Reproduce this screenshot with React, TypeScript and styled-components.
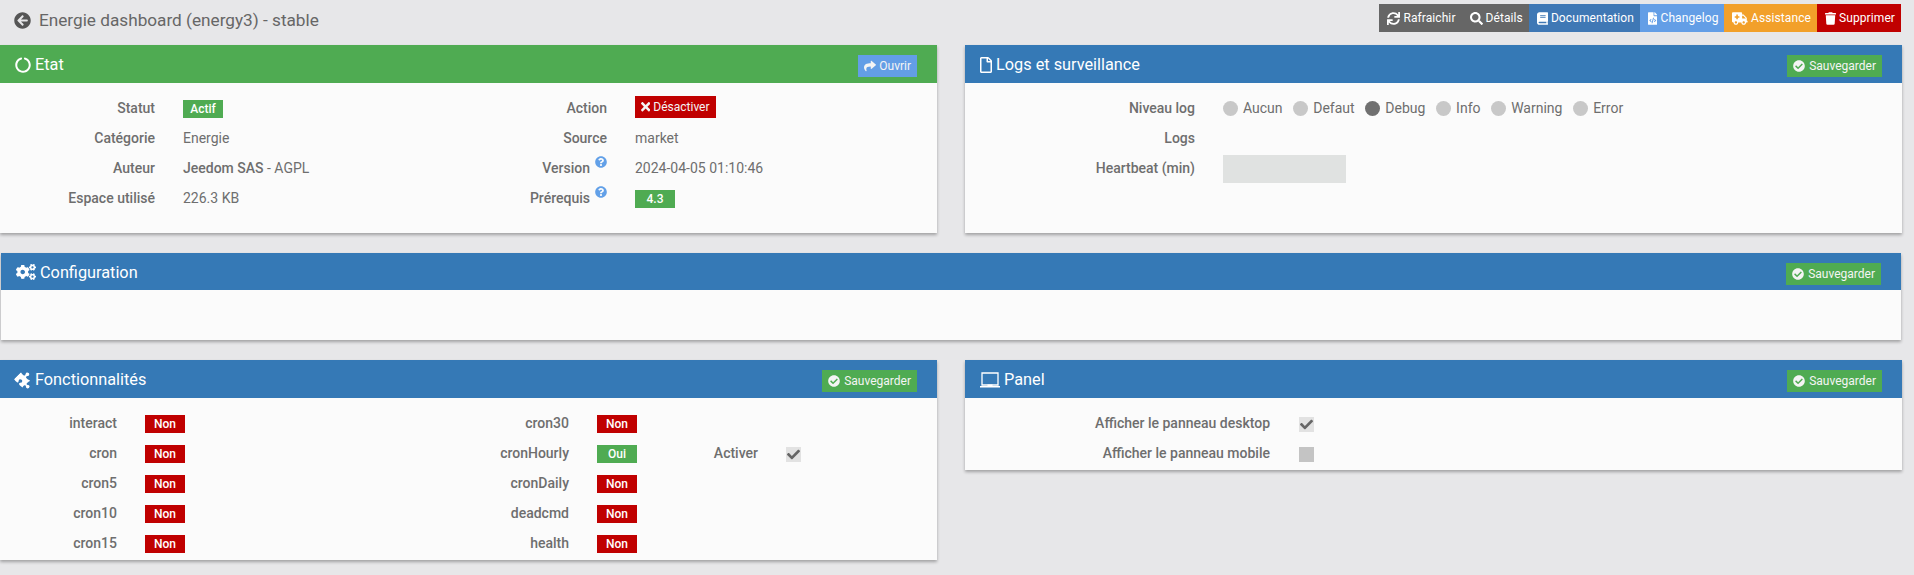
import { Fragment } from "react";
import styled, { createGlobalStyle } from "styled-components";
import {
  FaAmbulance,
  FaArrowCircleLeft,
  FaBook,
  FaCheck,
  FaCheckCircle,
  FaCircleNotch,
  FaCogs,
  FaFileCode,
  FaPuzzlePiece,
  FaQuestionCircle,
  FaRegFile,
  FaSearch,
  FaShare,
  FaSync,
  FaTimes,
  FaTrash,
} from "react-icons/fa";

const GREEN = "#4fab52";
const BLUE = "#3579b6";
const RED = "#c00000";

const GlobalStyle = createGlobalStyle`
  html, body {
    margin: 0;
    background: #e7e7e9;
    overflow: hidden;
  }
  body {
    font-family: Roboto, "Liberation Sans", sans-serif;
    font-size: 14px;
    color: #6e6e6e;
  }
`;

const Page = styled.div`
  width: 1902px;
  min-height: 575px;
`;

const TopBar = styled.div`
  height: 45px;
  display: flex;
  justify-content: space-between;
  align-items: flex-start;
`;

const PageTitle = styled.h1`
  margin: 0;
  height: 40px;
  padding-left: 14px;
  display: flex;
  align-items: center;
  gap: 8px;
  font-size: 17.2px;
  font-weight: 400;
  color: #666;
  svg {
    font-size: 17px;
    color: #555;
  }
`;

const ActionBar = styled.div`
  display: flex;
  margin: 4px 1px 0 0;
`;

const ActionButton = styled.button<{ $bg: string }>`
  height: 28px;
  padding: 0 6px 0 8px;
  border: 0;
  display: flex;
  align-items: center;
  gap: 3px;
  background: ${(p) => p.$bg};
  color: #fff;
  font-family: inherit;
  font-size: 12px;
  letter-spacing: 0.09px;
  svg {
    height: 13px;
    width: 13px;
  }
`;

// FontAwesome glyphs that are not square, the icon package boxes them in 1em
const BookIcon = styled(FaBook)`
  && {
    width: 11px;
  }
`;
const FileCodeIcon = styled(FaFileCode)`
  && {
    width: 9.5px;
  }
`;
const AmbulanceIcon = styled(FaAmbulance)`
  && {
    width: 15.6px;
  }
`;
const TrashIcon = styled(FaTrash)`
  && {
    width: 11px;
  }
`;
const CogsIcon = styled(FaCogs)`
  && {
    width: 20px;
  }
`;
const FileIcon = styled(FaRegFile)`
  && {
    width: 12px;
  }
`;
const TimesIcon = styled(FaTimes)`
  && {
    width: 9.3px;
    height: 13.5px;
  }
`;
const TiltedPiece = styled(FaPuzzlePiece)`
  transform: translateX(2px) rotate(45deg) scale(1.05);
`;

const Columns = styled.div`
  display: grid;
  grid-template-columns: 937px 937px;
  column-gap: 28px;
  row-gap: 20px;
  align-items: start;
`;

const Panel = styled.section<{ $inset?: boolean }>`
  background: #fbfbfb;
  box-shadow: 0 2px 3px rgba(0, 0, 0, 0.3);
  ${(p) => p.$inset && "grid-column: 1 / -1; margin: 0 1px;"}
`;

const PanelHeader = styled.header<{ $bg?: string; $short?: boolean }>`
  height: ${(p) => (p.$short ? "37px" : "38px")};
  padding: 0 20px 0 15px;
  display: flex;
  justify-content: space-between;
  align-items: center;
  background: ${(p) => p.$bg ?? BLUE};
  color: #fff;
`;

const PanelTitle = styled.h3`
  margin: 1px 0 0;
  display: flex;
  align-items: center;
  gap: 4px;
  font-size: 16.3px;
  font-weight: 400;
  svg {
    width: 16px;
    height: 16px;
  }
`;

const HeaderButton = styled.button<{ $bg?: string }>`
  height: 22px;
  padding: 0 6px;
  border: 0;
  align-self: flex-start;
  margin-top: 10px;
  display: flex;
  align-items: center;
  gap: 3px;
  background: ${(p) => p.$bg ?? GREEN};
  color: #f4f4f4;
  font-family: inherit;
  font-size: 12px;
  svg {
    font-size: 12px;
  }
`;

const SaveAction = styled(HeaderButton)`
  gap: 4px;
`;

const PanelBody = styled.div<{ $height: number }>`
  height: ${(p) => p.$height}px;
  box-sizing: border-box;
  padding-top: 13px;
`;

const Fields = styled.div<{ $columns: string; $gap?: number }>`
  display: grid;
  grid-template-columns: ${(p) => p.$columns};
  grid-auto-rows: 24px;
  column-gap: ${(p) => p.$gap ?? 28}px;
  row-gap: 6px;
  line-height: 24px;
`;

const Label = styled.div`
  text-align: right;
  font-weight: 500;
  white-space: nowrap;
`;

const Value = styled.div`
  white-space: nowrap;
  strong {
    font-weight: 500;
  }
`;

const Help = styled.sup`
  display: inline-block;
  margin-left: 5px;
  line-height: 0;
  vertical-align: 5px;
  color: #62a0e8;
  svg {
    font-size: 12px;
  }
`;

const Badge = styled.div<{ $bg?: string }>`
  width: 40px;
  height: 18px;
  margin-top: 4px;
  background: ${(p) => p.$bg ?? GREEN};
  color: #fff;
  font-size: 12px;
  font-weight: 500;
  line-height: 18px;
  text-align: center;
`;

const DangerButton = styled.button`
  height: 22px;
  padding: 0 6px;
  border: 0;
  display: flex;
  align-items: center;
  gap: 3px;
  background: ${RED};
  color: #f4f4f4;
  font-family: inherit;
  font-size: 12px;
`;

const RadioGroup = styled.div`
  display: flex;
  gap: 10.7px;
`;

const Radio = styled.label`
  display: flex;
  align-items: center;
  gap: 5px;
`;

const RadioDot = styled.span<{ $on?: boolean }>`
  width: 15px;
  height: 15px;
  border-radius: 50%;
  background: ${(p) => (p.$on ? "#707070" : "#c8c8c8")};
`;

const NumberBox = styled.div`
  width: 123px;
  height: 28px;
  margin-top: -1px;
  background: #e0e2e1;
`;

const CheckBox = styled.div<{ $on?: boolean }>`
  width: 15px;
  height: 15px;
  margin-top: 6px;
  display: flex;
  align-items: center;
  justify-content: center;
  background: ${(p) => (p.$on ? "#e2e2e2" : "#c4c4c4")};
  color: #666;
  svg {
    font-size: 13px;
  }
`;

const LOG_LEVELS = ["Aucun", "Defaut", "Debug", "Info", "Warning", "Error"];

const FEATURES: [string, boolean, string, boolean][] = [
  ["interact", false, "cron30", false],
  ["cron", false, "cronHourly", true],
  ["cron5", false, "cronDaily", false],
  ["cron10", false, "deadcmd", false],
  ["cron15", false, "health", false],
];

function YesNo({ on }: { on: boolean }) {
  return on ? <Badge>Oui</Badge> : <Badge $bg={RED}>Non</Badge>;
}

function SaveButton() {
  return (
    <SaveAction>
      <FaCheckCircle />
      Sauvegarder
    </SaveAction>
  );
}

function ScreenIcon() {
  return (
    <svg viewBox="0 0 20 16" fill="none" style={{ width: 20 }}>
      <path d="M2 1h16v12H2z" stroke="#fff" strokeWidth="1.3" />
      <path d="M0 14h7.5v-1.5h5V14H20v1.4H0z" fill="#fff" />
    </svg>
  );
}

export default function App() {
  return (
    <Page>
      <GlobalStyle />
      <TopBar>
        <PageTitle>
          <FaArrowCircleLeft />
          Energie dashboard (energy3) - stable
        </PageTitle>
        <ActionBar>
          <ActionButton $bg="#666">
            <FaSync />
            Rafraichir
          </ActionButton>
          <ActionButton $bg="#666">
            <FaSearch />
            Détails
          </ActionButton>
          <ActionButton $bg="#3f78b5">
            <BookIcon />
            Documentation
          </ActionButton>
          <ActionButton $bg="#639ee6">
            <FileCodeIcon />
            Changelog
          </ActionButton>
          <ActionButton $bg="#f2a02a">
            <AmbulanceIcon />
            Assistance
          </ActionButton>
          <ActionButton $bg={RED}>
            <TrashIcon />
            Supprimer
          </ActionButton>
        </ActionBar>
      </TopBar>

      <Columns>
        <Panel>
          <PanelHeader $bg={GREEN}>
            <PanelTitle>
              <FaCircleNotch />
              Etat
            </PanelTitle>
            <HeaderButton $bg="#639ee6">
              <FaShare />
              Ouvrir
            </HeaderButton>
          </PanelHeader>
          <PanelBody $height={150}>
            <Fields $columns="155px 268px 128px 1fr">
              <Label>Statut</Label>
              <Value>
                <Badge>Actif</Badge>
              </Value>
              <Label>Action</Label>
              <Value>
                <DangerButton>
                  <TimesIcon />
                  Désactiver
                </DangerButton>
              </Value>
              <Label>Catégorie</Label>
              <Value>Energie</Value>
              <Label>Source</Label>
              <Value>market</Value>
              <Label>Auteur</Label>
              <Value>
                <strong>Jeedom SAS</strong> - AGPL
              </Value>
              <Label>
                Version
                <Help>
                  <FaQuestionCircle />
                </Help>
              </Label>
              <Value>2024-04-05 01:10:46</Value>
              <Label>Espace utilisé</Label>
              <Value>226.3 KB</Value>
              <Label>
                Prérequis
                <Help>
                  <FaQuestionCircle />
                </Help>
              </Label>
              <Value>
                <Badge>4.3</Badge>
              </Value>
            </Fields>
          </PanelBody>
        </Panel>

        <Panel>
          <PanelHeader>
            <PanelTitle>
              <FileIcon />
              Logs et surveillance
            </PanelTitle>
            <SaveButton />
          </PanelHeader>
          <PanelBody $height={150}>
            <Fields $columns="230px 1fr">
              <Label>Niveau log</Label>
              <RadioGroup>
                {LOG_LEVELS.map((level) => (
                  <Radio key={level}>
                    <RadioDot $on={level === "Debug"} />
                    {level}
                  </Radio>
                ))}
              </RadioGroup>
              <Label>Logs</Label>
              <Value />
              <Label>Heartbeat (min)</Label>
              <NumberBox />
            </Fields>
          </PanelBody>
        </Panel>

        <Panel $inset>
          <PanelHeader $short>
            <PanelTitle>
              <CogsIcon />
              Configuration
            </PanelTitle>
            <SaveButton />
          </PanelHeader>
          <PanelBody $height={50} />
        </Panel>

        <Panel>
          <PanelHeader>
            <PanelTitle>
              <TiltedPiece />
              Fonctionnalités
            </PanelTitle>
            <SaveButton />
          </PanelHeader>
          <PanelBody $height={162}>
            <Fields $columns="117px 272px 124px 40px 93px 15px">
              {FEATURES.map(([left, leftOn, right, rightOn]) => (
                <Fragment key={left}>
                  <Label>{left}</Label>
                  <YesNo on={leftOn} />
                  <Label>{right}</Label>
                  <YesNo on={rightOn} />
                  {right === "cronHourly" ? (
                    <>
                      <Label>Activer</Label>
                      <CheckBox $on>
                        <FaCheck />
                      </CheckBox>
                    </>
                  ) : (
                    <>
                      <span />
                      <span />
                    </>
                  )}
                </Fragment>
              ))}
            </Fields>
          </PanelBody>
        </Panel>

        <Panel>
          <PanelHeader>
            <PanelTitle>
              <ScreenIcon />
              Panel
            </PanelTitle>
            <SaveButton />
          </PanelHeader>
          <PanelBody $height={72}>
            <Fields $columns="305px 15px" $gap={29}>
              <Label>Afficher le panneau desktop</Label>
              <CheckBox $on>
                <FaCheck />
              </CheckBox>
              <Label>Afficher le panneau mobile</Label>
              <CheckBox />
            </Fields>
          </PanelBody>
        </Panel>
      </Columns>
    </Page>
  );
}
